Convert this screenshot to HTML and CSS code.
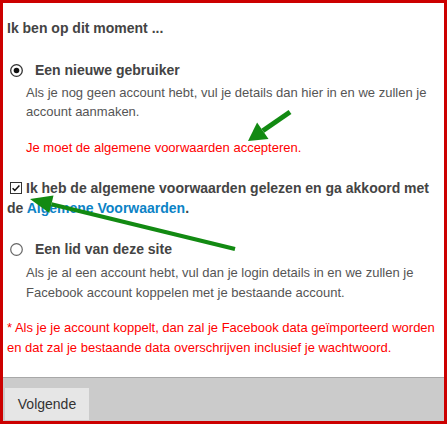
FILE: index.html
```html
<!DOCTYPE html>
<html lang="nl">
<head>
<meta charset="utf-8">
<title>Facebook koppelen</title>
<link rel="stylesheet" href="styles.css">
</head>
<body>
<div class="frame">
  <div class="content">
    <h2 class="title">Ik ben op dit moment ...</h2>

    <div class="option">
      <span class="radio">
        <svg width="13" height="13" viewBox="0 0 13 13"><circle cx="6.5" cy="6.5" r="5.8" fill="#fff" stroke="#333" stroke-width="1.3"/><circle cx="6.5" cy="6.5" r="2.8" fill="#111"/></svg>
      </span>
      <span class="opt-label">Een nieuwe gebruiker</span>
    </div>
    <p class="desc">Als je nog geen account hebt, vul je details dan hier in en we zullen je account aanmaken.</p>
    <p class="error">Je moet de algemene voorwaarden accepteren.</p>

    <p class="terms"><span class="checkbox"><svg width="12" height="12" viewBox="0 0 12 12"><rect x="0.5" y="0.5" width="11" height="11" fill="#fff" stroke="#333" stroke-width="1"/><path d="M2.6 6.2 L4.8 8.4 L9.4 3.4" fill="none" stroke="#111" stroke-width="1.5"/></svg></span><span>Ik heb de algemene voorwaarden gelezen en ga akkoord met</span> <span>de <a class="link" href="#">Algemene Voorwaarden</a>.</span></p>

    <div class="option option-second">
      <span class="radio">
        <svg width="13" height="13" viewBox="0 0 13 13"><circle cx="6.5" cy="6.5" r="5.8" fill="#fff" stroke="#666" stroke-width="1.2"/></svg>
      </span>
      <span class="opt-label">Een lid van deze site</span>
    </div>
    <p class="desc desc-second">Als je al een account hebt, vul dan je login details in en we zullen je Facebook account koppelen met je bestaande account.</p>

    <p class="note">* Als je je account koppelt, dan zal je Facebook data geïmporteerd worden en dat zal je bestaande data overschrijven inclusief je wachtwoord.</p>
  </div>
  <div class="footer">
    <button class="btn" type="button">Volgende</button>
  </div>

  <svg class="arrows" width="447" height="424" viewBox="0 0 447 424">
    <line x1="290" y1="112" x2="262.8" y2="130.8" stroke="#128a12" stroke-width="5"/>
    <polygon points="248,141 268.5,139 257.1,122.6" fill="#128a12"/>
    <line x1="235" y1="249" x2="51.4" y2="204.2" stroke="#128a12" stroke-width="4"/>
    <polygon points="30,199 53.5,195.5 49.3,212.9" fill="#128a12"/>
  </svg>
</div>
</body>
</html>
```

FILE: styles.css
```css
* {
  box-sizing: border-box;
}

html, body {
  margin: 0;
  padding: 0;
  background: #fff;
}

.frame {
  position: relative;
  width: 447px;
  height: 424px;
  border: 3px solid #cc0000;
  display: flex;
  flex-direction: column;
  font-family: "Liberation Sans", Arial, sans-serif;
  color: #555;
}

.content {
  flex: 1;
  padding: 15px 4px 0 4px;
}

.title {
  margin: 0;
  font-size: 14px;
  line-height: 20px;
  font-weight: bold;
  color: #444;
}

.option {
  display: flex;
  align-items: center;
  margin-top: 22px;
  height: 20px;
}

.option-second {
  margin-top: 21px;
}

.radio {
  display: flex;
  width: 13px;
  height: 13px;
  margin-left: 3px;
  margin-right: 12px;
}

.opt-label {
  font-size: 14px;
  line-height: 20px;
  font-weight: bold;
  color: #444;
}

.desc {
  margin: 3px 0 0 19px;
  font-size: 13px;
  line-height: 19px;
  color: #555;
}

.desc-second {
  margin-top: 4px;
  line-height: 20px;
}

.error {
  margin: 17px 0 0 19px;
  font-size: 13px;
  line-height: 20px;
  color: #ff0000;
}

.terms {
  margin: 20px 0 0 0;
  font-size: 14px;
  line-height: 20px;
  font-weight: bold;
  color: #444;
}

.checkbox {
  display: inline-block;
  width: 12px;
  height: 12px;
  margin-left: 3px;
  margin-right: 4px;
  vertical-align: -1px;
}

.checkbox svg {
  display: block;
}

.link {
  color: #0c83c6;
  text-decoration: none;
}

.note {
  margin: 15px 0 0 0;
  font-size: 13px;
  line-height: 20px;
  color: #ff0000;
}

.footer {
  height: 44px;
  background: #cbcbcb;
  border-top: 1px solid #a8a8a8;
  padding: 10px 0 0 2px;
  display: flex;
  align-items: flex-start;
}

.btn {
  height: 32px;
  width: 84px;
  padding: 0;
  border: none;
  background: #e6e6e6;
  font-family: "Liberation Sans", Arial, sans-serif;
  font-size: 14px;
  color: #333;
}

.arrows {
  position: absolute;
  left: -3px;
  top: -3px;
  pointer-events: none;
}
```
